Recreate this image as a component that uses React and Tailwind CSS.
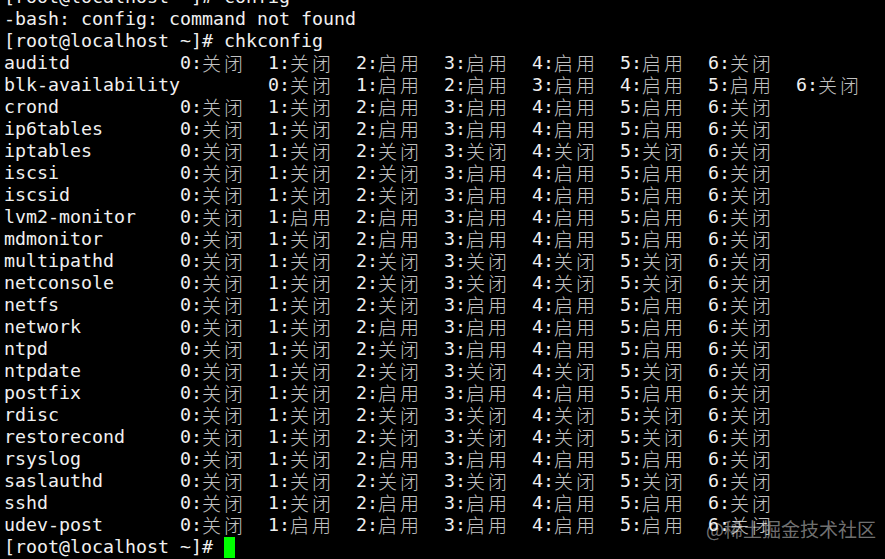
import React from "react";

const OFF = "关闭";
const ON = "启用";

const rows = [
  ["auditd", "0011110"],
  ["blk-availability", "0111110"],
  ["crond", "0011110"],
  ["ip6tables", "0011110"],
  ["iptables", "0000000"],
  ["iscsi", "0001110"],
  ["iscsid", "0001110"],
  ["lvm2-monitor", "0111110"],
  ["mdmonitor", "0011110"],
  ["multipathd", "0000000"],
  ["netconsole", "0000000"],
  ["netfs", "0001110"],
  ["network", "0011110"],
  ["ntpd", "0001110"],
  ["ntpdate", "0000000"],
  ["postfix", "0011110"],
  ["rdisc", "0000000"],
  ["restorecond", "0000000"],
  ["rsyslog", "0011110"],
  ["saslauthd", "0000000"],
  ["sshd", "0011110"],
  ["udev-post", "0111110"],
];

const mono = "font-['DejaVu_Sans_Mono',monospace] text-[18.27px] leading-[22px] text-[#f0f0f0]";
const cjk = "font-['Noto_Sans_CJK_SC',sans-serif] text-[19px] leading-[22px] text-[#c2c2c2] font-light";

function Line({ children }) {
  return <div className="flex h-[22px] items-center leading-[22px] whitespace-pre">{children}</div>;
}

function Cell({ level, on }) {
  const word = on ? ON : OFF;
  return (
    <div className="flex w-[88px] shrink-0">
      <span className={mono}>{level}:</span>
      {word.split("").map((c, i) => (
        <span key={i} className={`${cjk} inline-block w-[22px]`}>
          {c}
        </span>
      ))}
    </div>
  );
}

export default function App() {
  return (
    <div className="relative w-[885px] h-[559px] bg-black overflow-hidden">
      <div className="pl-[4px] mt-[-14px] flex flex-col">
        <Line>
          <span className={mono}>[root@localhost ~]# config</span>
        </Line>
        <Line>
          <span className={mono}>-bash: config: command not found</span>
        </Line>
        <Line>
          <span className={mono}>[root@localhost ~]# chkconfig</span>
        </Line>
        {rows.map(([name, states]) => (
          <Line key={name}>
            <span className={`${mono} shrink-0 ${name.length >= 16 ? "w-[264px]" : "w-[176px]"}`}>{name}</span>
            {states.split("").map((s, i) => (
              <Cell key={i} level={i} on={s === "1"} />
            ))}
          </Line>
        ))}
        <Line>
          <span className={mono}>[root@localhost ~]# </span>
          <span className="inline-block w-[11px] h-[21px] bg-[#00ff00]" />
        </Line>
      </div>
      <div className="absolute left-[706px] top-[517px] font-['Noto_Sans_CJK_SC',sans-serif] text-[19px] leading-[24px] text-white/45 whitespace-nowrap">
        @稀土掘金技术社区
      </div>
    </div>
  );
}
